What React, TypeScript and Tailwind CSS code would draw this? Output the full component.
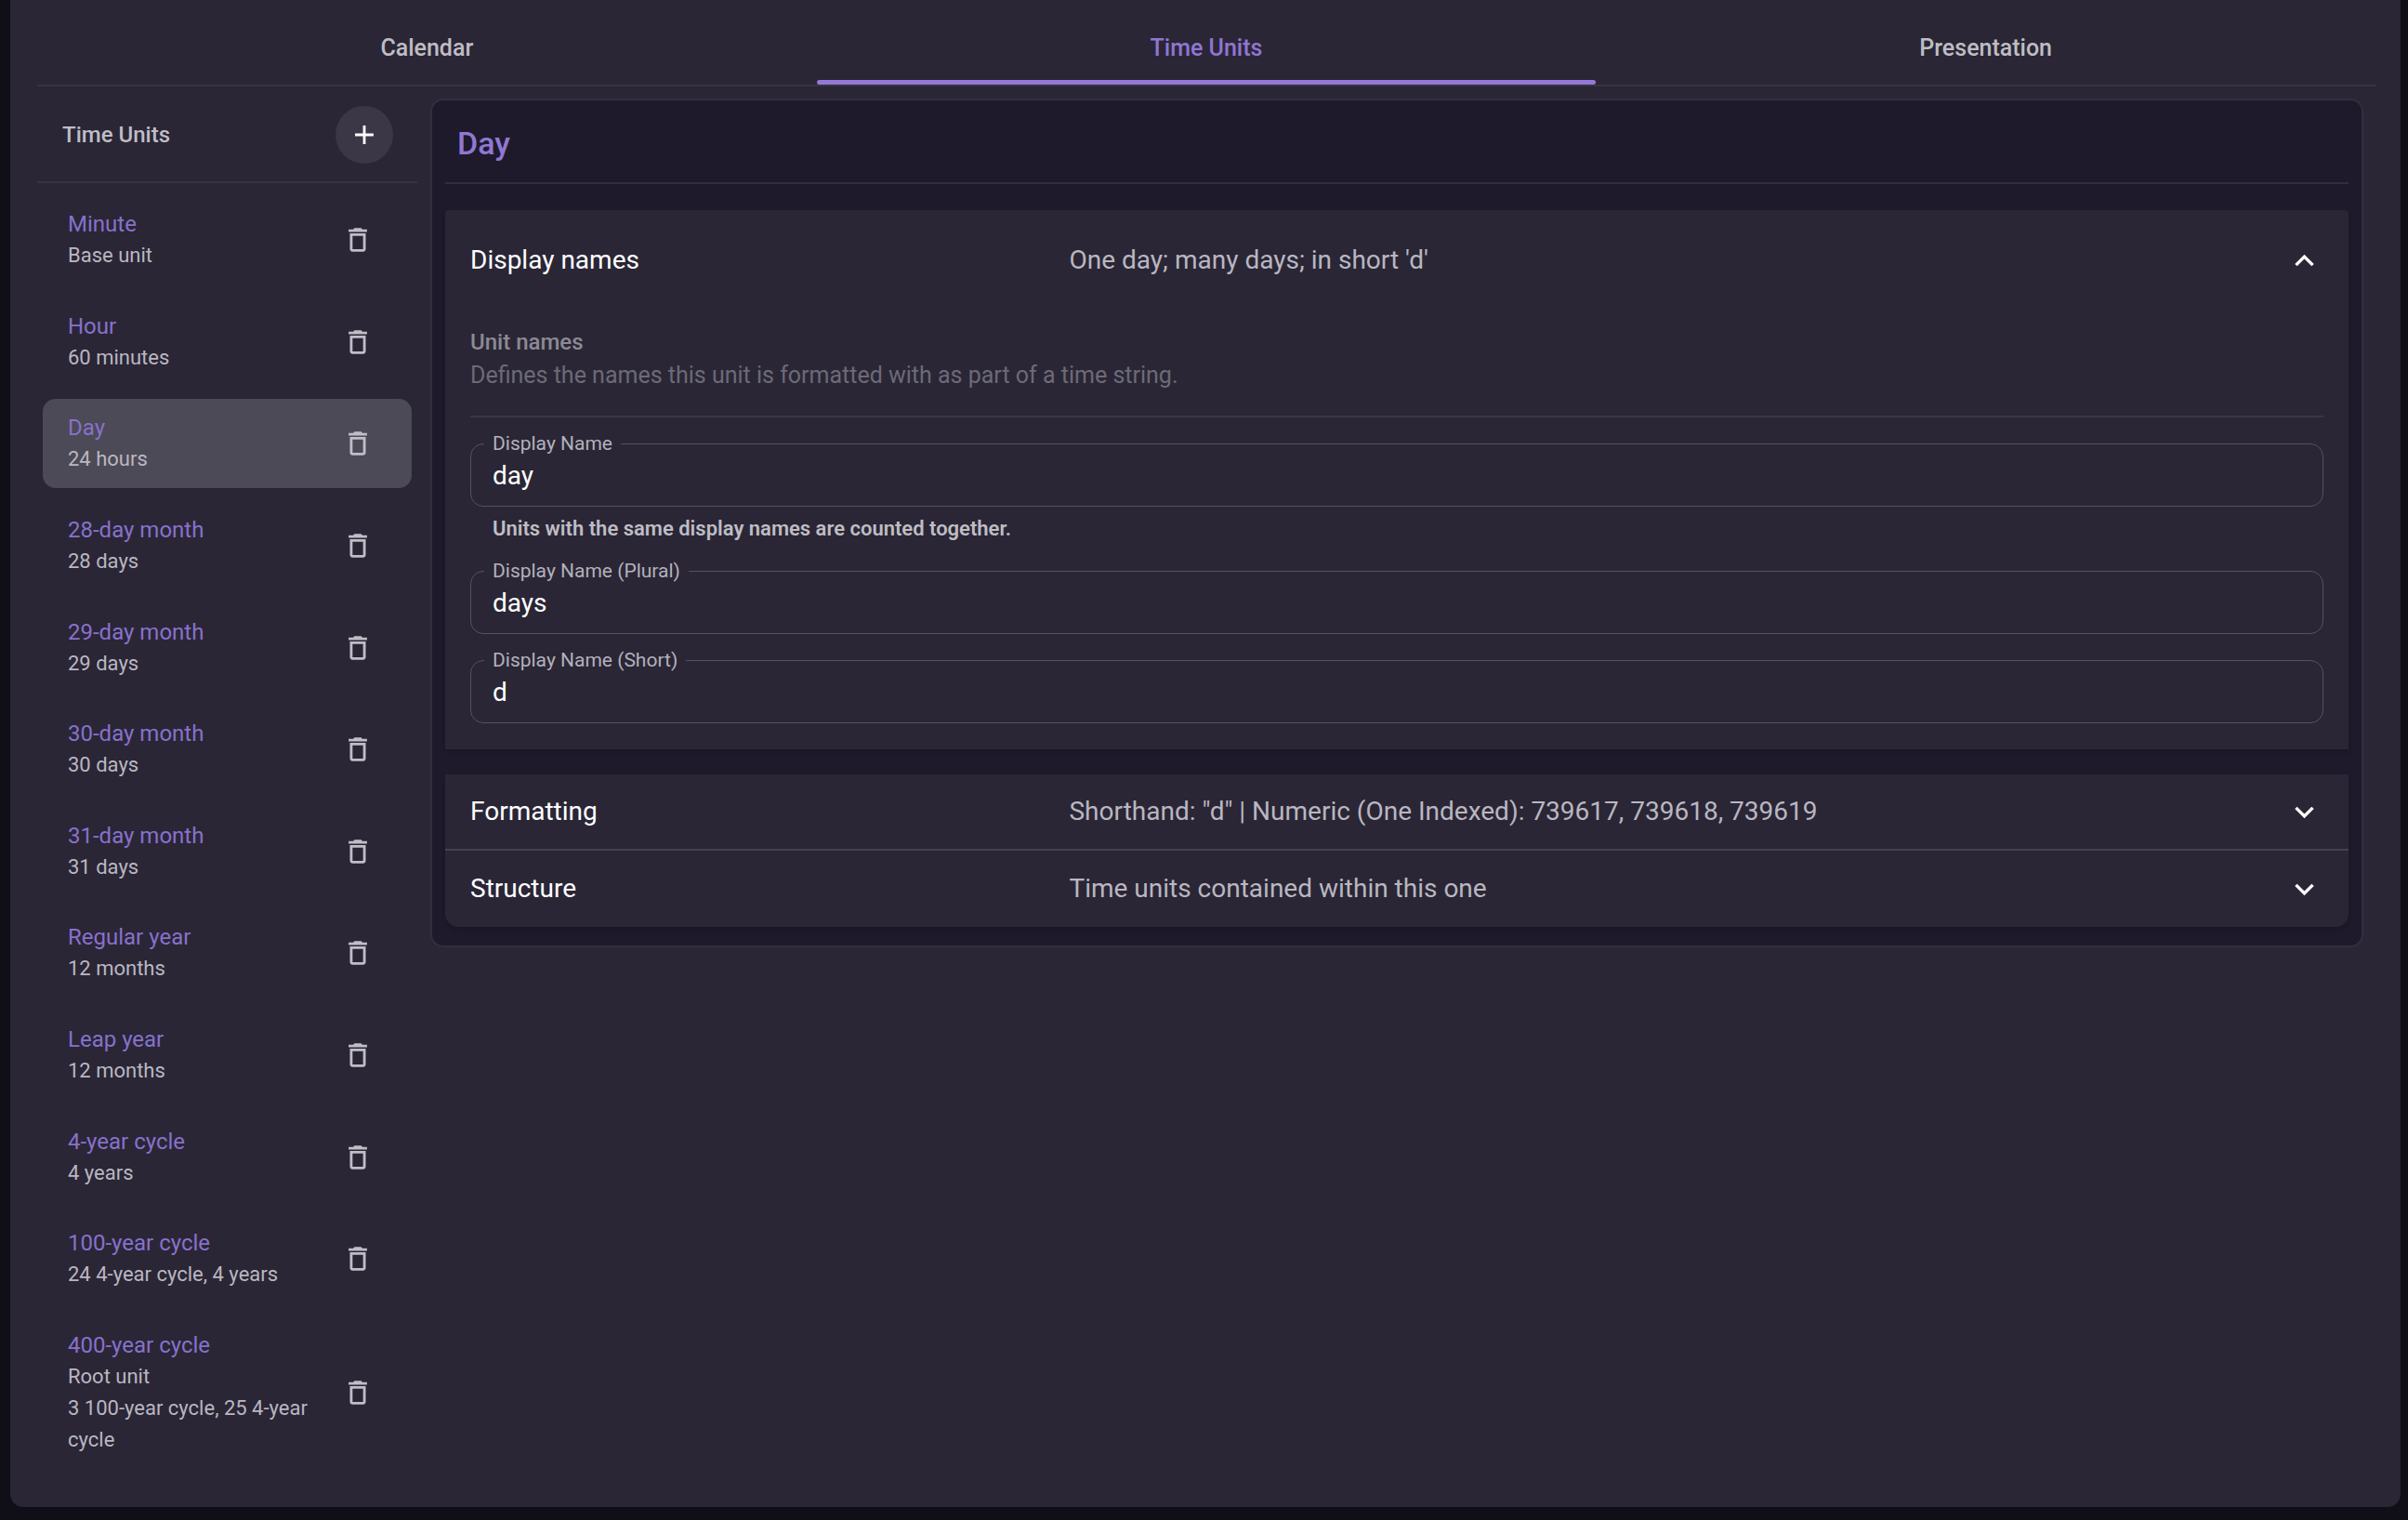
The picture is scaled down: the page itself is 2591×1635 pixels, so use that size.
import React, { useState } from 'react';
import { MdAdd, MdDeleteOutline, MdExpandLess, MdExpandMore } from 'react-icons/md';
import clsx from 'clsx';

const tabs = ['Calendar', 'Time Units', 'Presentation'];

const units = [
  { name: 'Minute', lines: ['Base unit'] },
  { name: 'Hour', lines: ['60 minutes'] },
  { name: 'Day', lines: ['24 hours'] },
  { name: '28-day month', lines: ['28 days'] },
  { name: '29-day month', lines: ['29 days'] },
  { name: '30-day month', lines: ['30 days'] },
  { name: '31-day month', lines: ['31 days'] },
  { name: 'Regular year', lines: ['12 months'] },
  { name: 'Leap year', lines: ['12 months'] },
  { name: '4-year cycle', lines: ['4 years'] },
  { name: '100-year cycle', lines: ['24 4-year cycle, 4 years'] },
  { name: '400-year cycle', lines: ['Root unit', '3 100-year cycle, 25 4-year cycle'] },
];

const TabBar = () => {
  const [active, setActive] = useState('Time Units');

  return (
    <nav className="flex h-[93px] border-b-2 border-[#373343]" role="tablist">
      {tabs.map((tab) => (
        <button
          key={tab}
          role="tab"
          aria-selected={tab === active}
          onClick={() => setActive(tab)}
          className={clsx(
            'relative flex-1 pt-3 text-[25px] font-medium',
            tab === active ? 'text-[#8f76d2]' : 'text-[#bfbdc3]'
          )}
        >
          {tab}
          {tab === active && <span className="absolute inset-x-0 bottom-0 h-[5px] rounded-full bg-[#9478d6]" />}
        </button>
      ))}
    </nav>
  );
};

const Sidebar = () => {
  const [selected, setSelected] = useState('Day');

  return (
    <aside className="flex w-[409px] shrink-0 flex-col">
      <div className="flex h-[104px] items-center justify-between border-b-2 border-[#373343] pl-[27px] pr-[26px] pt-px">
        <h2 className="text-2xl font-medium text-[#bfbdc6]">Time Units</h2>
        <button aria-label="Add time unit" className="rounded-full bg-[#3b3747] p-[14px] text-white">
          <MdAdd className="size-[34px]" />
        </button>
      </div>
      <ul className="flex flex-1 flex-col justify-between px-[6px] pb-[41px] pt-[13px]">
        {units.map((unit) => (
          <li
            key={unit.name}
            className={clsx(
              'flex items-center justify-between rounded-[14px] py-[14px] pl-[27px] pr-[41px]',
              unit.name === selected && 'bg-[#4d4a57]'
            )}
          >
            <button onClick={() => setSelected(unit.name)} className="w-[280px] text-left">
              <span className="block text-2xl leading-[34px] text-[#8871cb]">{unit.name}</span>
              {unit.lines.map((line) => (
                <span key={line} className="block text-[22px] leading-[34px] text-[#b9b7c0]">{line}</span>
              ))}
            </button>
            <button aria-label={`Delete ${unit.name}`} className="text-[#bfbdc6]">
              <MdDeleteOutline className="size-[34px]" />
            </button>
          </li>
        ))}
      </ul>
    </aside>
  );
};

type FieldProps = { id: string; label: string; value: string; helper?: string };

const Field = ({ id, label, value, helper }: FieldProps) => (
  <div>
    <div className="relative">
      <label
        htmlFor={id}
        className="absolute -top-3 left-[15px] bg-[#2a2636] px-[9px] text-[21px] leading-6 text-[#b3b1ba]"
      >
        {label}
      </label>
      <input
        id={id}
        defaultValue={value}
        className="block h-[68px] w-full rounded-[14px] border border-[#555163] bg-transparent px-[23px] text-[28px] text-white outline-none"
      />
    </div>
    {helper && <p className="mt-[7px] px-6 text-[22px] leading-[34px] font-semibold text-[#bfbdc3]">{helper}</p>}
  </div>
);

type SummaryProps = { title: string; detail: string; expanded?: boolean };

const Summary = ({ title, detail, expanded }: SummaryProps) => (
  <button
    aria-expanded={!!expanded}
    className={clsx('flex w-full items-center px-[27px] text-left text-[28px]', expanded ? 'h-[108px]' : 'h-[82px]')}
  >
    <span className="flex flex-1 items-center">
      <span className="w-[33%] shrink-0 text-white">{title}</span>
      <span className="text-[#b9b7c0]">{detail}</span>
    </span>
    {expanded ? (
      <MdExpandLess className="size-[41px] text-white" />
    ) : (
      <MdExpandMore className="size-[41px] text-white" />
    )}
  </button>
);

const UnitPanel = () => (
  <main className="mt-[13px] flex-1 self-start rounded-[14px] border-2 border-[#322e40] bg-[#1e1a2b] px-[14px] pb-5">
    <h1 className="flex h-[90px] items-center border-b-2 border-[#322e40] px-[13px] pt-1 text-[34px] font-medium text-[#9078d3]">
      Day
    </h1>
    <section className="mt-7 rounded-t-[4px] bg-[#2a2636] shadow-md">
      <Summary title="Display names" detail="One day; many days; in short 'd'" expanded />
      <div className="px-[27px] pb-7">
        <div className="border-b-2 border-[#3b3747] pb-[25px] pt-4 text-2xl leading-9">
          <h3 className="font-medium text-[#8c8a93]">Unit names</h3>
          <p className="text-[25px] leading-9 text-[#6d6a76]">
            Defines the names this unit is formatted with as part of a time string.
          </p>
        </div>
        <div className="mt-7 flex flex-col gap-7">
          <Field
            id="display-name"
            label="Display Name"
            value="day"
            helper="Units with the same display names are counted together."
          />
          <Field id="display-name-plural" label="Display Name (Plural)" value="days" />
          <Field id="display-name-short" label="Display Name (Short)" value="d" />
        </div>
      </div>
    </section>
    <section className="mt-[27px] divide-y-2 divide-[#454151] rounded-b-[14px] bg-[#2a2636] shadow-md">
      <Summary title="Formatting" detail={'Shorthand: "d" | Numeric (One Indexed): 739617, 739618, 739619'} />
      <Summary title="Structure" detail="Time units contained within this one" />
    </section>
  </main>
);

export default function App() {
  return (
    <div className="flex min-h-screen flex-col bg-[#100e17] pb-[14px] pl-[11px] pr-2 font-[Roboto,sans-serif]">
      <div className="flex flex-1 flex-col rounded-b-[14px] bg-[#2a2636] pl-[29px] pr-[27px]">
        <TabBar />
        <div className="flex flex-1 gap-[14px] pr-[13px]">
          <Sidebar />
          <UnitPanel />
        </div>
      </div>
    </div>
  );
}
